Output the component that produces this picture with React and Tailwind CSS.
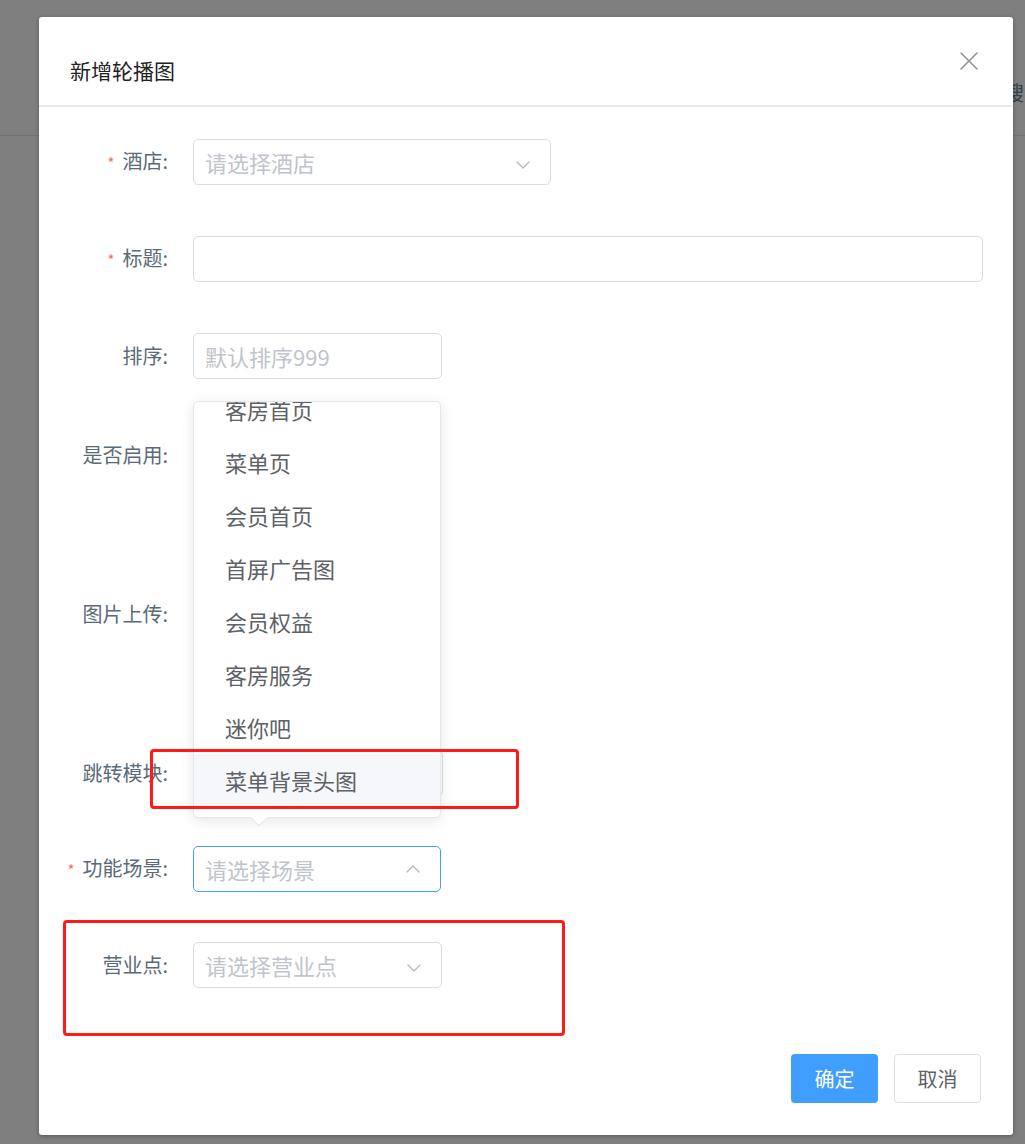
import { X, ChevronDown, ChevronUp } from 'lucide-react';

const scenes = ['客房首页', '菜单页', '会员首页', '首屏广告图', '会员权益', '客房服务', '迷你吧', '菜单背景头图'];

const Label = ({ text, required }) => (
  <div className="w-[129px] shrink-0 text-right text-[20px] leading-[46px] text-[#5a6a78]">
    {required && <span className="mr-[8px] text-[15px] text-[#f56c6c]">*</span>}
    {text}:
  </div>
);

const Field = ({ placeholder, width, arrow, focused }) => (
  <div
    className={`ml-[25px] flex h-[46px] items-center justify-between rounded-[5px] border bg-white pl-[11px] pr-[15px] ${width} ${
      focused ? 'border-[#409eff]' : 'border-[#d9dde3]'
    }`}
  >
    <span className="text-[22px] leading-none text-[#c0c4cc]">{placeholder}</span>
    {arrow === 'down' && <ChevronDown size={24} strokeWidth={1.3} className="mt-[6px] text-[#b4b8bf]" />}
    {arrow === 'up' && <ChevronUp size={24} strokeWidth={1.3} className="text-[#b4b8bf]" />}
  </div>
);

export default function App() {
  return (
    <div className="relative h-[1144px] w-[1025px] overflow-hidden bg-[#7f7f7f] font-['Noto_Sans_CJK_SC','Microsoft_YaHei',sans-serif]">
      {/* page behind the overlay */}
      <div className="absolute left-0 right-0 top-[135px] h-px bg-[#737373]" />
      <div className="absolute left-[1004px] top-[78px] text-[20px] text-[#34404b]">搜</div>

      <div className="absolute left-[39px] top-[17px] flex h-[1118px] w-[974px] flex-col rounded-[3px] bg-white shadow-[0_1px_4px_rgba(0,0,0,0.3)]">
        <div className="relative h-[90px] shrink-0 border-b-2 border-[#e9ebef] pl-[31px] pt-[40px]">
          <h2 className="text-[21px] leading-[26px] text-[#222]">新增轮播图</h2>
          <X size={32} strokeWidth={1.2} className="absolute right-[28px] top-[28px] text-[#909399]" />
        </div>

        <div className="pt-[32px]">
          <div className="flex h-[46px] items-center">
            <Label text="酒店" required />
            <Field placeholder="请选择酒店" width="w-[358px]" arrow="down" />
          </div>
          <div className="mt-[51px] flex h-[46px] items-center">
            <Label text="标题" required />
            <Field placeholder="" width="w-[790px]" />
          </div>
          <div className="mt-[51px] flex h-[46px] items-center">
            <Label text="排序" />
            <Field placeholder="默认排序999" width="w-[249px]" />
          </div>
          <div className="mt-[53px] flex h-[46px] items-center">
            <Label text="是否启用" />
          </div>
          <div className="mt-[113px] flex h-[46px] items-center">
            <Label text="图片上传" />
          </div>
          <div className="mt-[113px] flex h-[46px] items-center">
            <Label text="跳转模块" />
            <Field placeholder="" width="w-[250px]" />
          </div>
          <div className="mt-[50px] flex h-[46px] items-center">
            <Label text="功能场景" required />
            <Field placeholder="请选择场景" width="w-[248px]" arrow="up" focused />
          </div>
          <div className="mt-[50px] flex h-[46px] items-center">
            <Label text="营业点" />
            <Field placeholder="请选择营业点" width="w-[249px]" arrow="down" />
          </div>
        </div>

        <div className="mt-auto flex justify-end gap-[16px] pb-[32px] pr-[32px]">
          <button className="h-[49px] w-[87px] rounded-[4px] bg-[#409eff] text-[20px] text-white">确定</button>
          <button className="h-[49px] w-[87px] rounded-[4px] border border-[#dcdfe6] bg-white text-[20px] text-[#606266]">取消</button>
        </div>

        {/* scene dropdown */}
        <div className="absolute left-[154px] top-[384px] h-[417px] w-[248px] rounded-[5px] border border-[#e4e7ed] bg-white shadow-[0_3px_14px_rgba(0,0,0,0.1)]">
          <div className="h-full overflow-hidden rounded-[5px]">
            <div className="-mt-[19px]">
              {scenes.map((s, i) => (
                <div
                  key={s}
                  className={`flex h-[53px] items-center pl-[31px] text-[22px] text-[#5e6166] ${
                    i === scenes.length - 1 ? 'bg-[#f5f7fa]' : ''
                  }`}
                >
                  {s}
                </div>
              ))}
            </div>
          </div>
          <div className="absolute bottom-[-7px] left-[59px] h-[12px] w-[12px] rotate-45 border-b border-r border-[#e4e7ed] bg-white" />
        </div>
      </div>

      {/* annotations */}
      <div className="absolute left-[150px] top-[749px] h-[60px] w-[369px] rounded-[4px] border-[3px] border-[#ff1a1a]" />
      <div className="absolute left-[63px] top-[920px] h-[116px] w-[502px] rounded-[4px] border-[3px] border-[#ff1a1a]" />
    </div>
  );
}
